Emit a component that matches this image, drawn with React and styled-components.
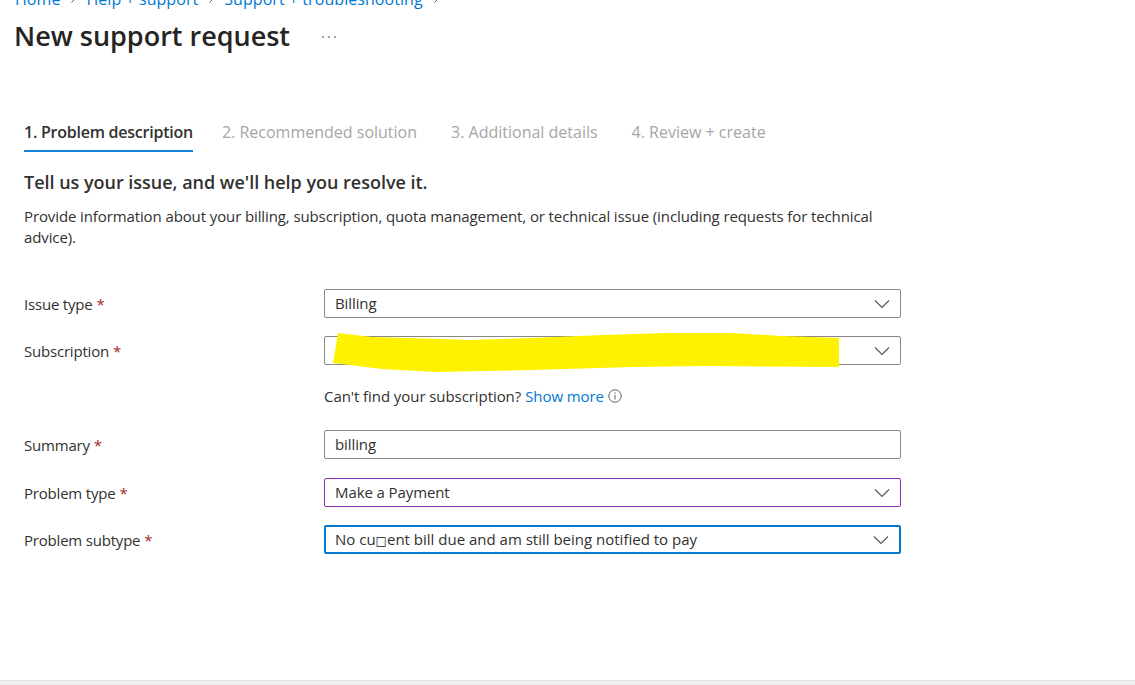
import React from 'react'
import styled, { createGlobalStyle } from 'styled-components'

const GlobalStyle = createGlobalStyle`
  html, body { margin: 0; padding: 0; background: #fff; overflow: hidden; }
  body { font-family: 'Open Sans', 'Noto Sans', sans-serif; color: #323130; }
`

const Page = styled.div`
  height: 685px;
  display: flex;
  flex-direction: column;
  overflow: hidden;
`
const Main = styled.div`
  flex: 1;
  padding-left: 15px;
  overflow: hidden;
`
const Breadcrumb = styled.nav`
  display: flex;
  align-items: center;
  height: 20px;
  margin-top: -11px;
  font-size: 16px;
  letter-spacing: 0.06px;
  white-space: nowrap;
  color: #0078d4;
`
const Crumb = styled.a`
  color: #0078d4;
`
const CrumbSep = styled.svg`
  width: 8px;
  height: 8px;
  margin: 0 9px 0 9px;
  fill: none;
  stroke: #605e5c;
  stroke-width: 1;
`
const TitleRow = styled.div`
  display: flex;
  align-items: center;
  margin-top: 7px;
  margin-left: -1px;
  height: 38px;
`
const Title = styled.h1`
  margin: 0;
  font-size: 27px;
  font-weight: 600;
  letter-spacing: 0;
  color: #252423;
`
const More = styled.svg`
  width: 16px;
  height: 4px;
  margin: 4px 0 0 31px;
  fill: #323130;
`
const Content = styled.div`
  padding-left: 9px;
  width: 877px;
`
const Tabs = styled.div`
  display: flex;
  margin-top: 59px;
`
const Tab = styled.div`
  height: 39px;
  line-height: 38px;
  box-sizing: border-box;
  font-size: 16px;
  white-space: nowrap;
  margin-right: ${p => (p.$active ? 29 : 34)}px;
  letter-spacing: ${p => (p.$active ? -0.24 : 0)}px;
  font-weight: ${p => (p.$active ? 600 : 400)};
  color: ${p => (p.$active ? '#323130' : '#a6a6a6')};
  border-bottom: 2px solid ${p => (p.$active ? '#0f82d9' : 'transparent')};
`
const Heading = styled.h2`
  margin: 18px 0 0;
  font-size: 18px;
  line-height: 24px;
  font-weight: 600;
  letter-spacing: -0.02px;
  color: #323130;
`
const Intro = styled.p`
  margin: 12px 0 0;
  font-size: 15px;
  line-height: 21px;
  letter-spacing: -0.11px;
  color: #323130;
`
const Form = styled.div`
  margin-top: 41px;
  display: flex;
  flex-direction: column;
`
const Row = styled.div`
  display: grid;
  grid-template-columns: 300px 577px;
  align-items: center;
  height: 29px;
  margin-bottom: ${p => p.$gap}px;
`
const Label = styled.label`
  font-size: 15px;
  letter-spacing: -0.2px;
  color: #323130;
`
const Req = styled.span`
  color: #a4262c;
  margin-left: 4px;
`
const Field = styled.div`
  position: relative;
  height: 29px;
  box-sizing: border-box;
  display: flex;
  align-items: center;
  justify-content: space-between;
  padding: 0 10px 2px ${p => (p.$focus ? 9 : 10)}px;
  border-radius: 2px;
  border: ${p => (p.$focus ? '2px' : '1px')} solid ${p => p.$color || '#8a8886'};
  font-size: 15px;
  letter-spacing: ${p => (p.$focus ? 0 : -0.1)}px;
  color: #323130;
  background: #fff;
`
const Missing = styled.span`
  font-family: 'DejaVu Sans', sans-serif;
  font-size: 12px;
  font-weight: 700;
  letter-spacing: 0;
  color: #111;
`
const Chevron = styled.svg`
  width: 16px;
  height: 10px;
  margin-top: 2px;
  fill: none;
  stroke: #555;
  stroke-width: 1.1;
`
const Scribble = styled.svg`
  position: absolute;
  left: 7px;
  top: -5px;
  width: 508px;
  height: 42px;
  fill: #fff200;
`
const Hint = styled.div`
  display: flex;
  align-items: center;
  height: 20px;
  margin: 1px 0 24px 300px;
  font-size: 15px;
  letter-spacing: -0.07px;
  color: #323130;
`
const HintLink = styled.a`
  color: #0078d4;
  margin-left: 4px;
`
const InfoIcon = styled.svg`
  width: 14px;
  height: 14px;
  margin-left: 4px;
  fill: none;
  stroke: #605e5c;
`
const FooterBar = styled.div`
  height: 5px;
  background: #f0f0f0;
  border-top: 1px solid #e6e6e6;
  box-sizing: border-box;
`

const Arrow = () => (
  <Chevron viewBox="0 0 16 10">
    <path d="M1 1.5 L8 8.5 L15 1.5" />
  </Chevron>
)

const crumbs = ['Home', 'Help + support', 'Support + troubleshooting']

export default function App() {
  return (
    <Page>
      <GlobalStyle />
      <Main>
        <Breadcrumb>
          {crumbs.map(c => (
            <React.Fragment key={c}>
              <Crumb>{c}</Crumb>
              <CrumbSep viewBox="0 0 8 8"><path d="M2.5 .5 L6 4 L2.5 7.5" /></CrumbSep>
            </React.Fragment>
          ))}
        </Breadcrumb>
        <TitleRow>
          <Title>New support request</Title>
          <More viewBox="0 0 16 4">
            <circle cx="2" cy="2" r="0.8" />
            <circle cx="8" cy="2" r="0.8" />
            <circle cx="14" cy="2" r="0.8" />
          </More>
        </TitleRow>
        <Content>
          <Tabs>
            <Tab $active>1. Problem description</Tab>
            <Tab>2. Recommended solution</Tab>
            <Tab>3. Additional details</Tab>
            <Tab>4. Review + create</Tab>
          </Tabs>
          <Heading>Tell us your issue, and we'll help you resolve it.</Heading>
          <Intro>
            Provide information about your billing, subscription, quota management, or technical issue (including requests for technical advice).
          </Intro>
          <Form>
            <Row $gap={18}>
              <Label>Issue type<Req>*</Req></Label>
              <Field>Billing<Arrow /></Field>
            </Row>
            <Row $gap={20}>
              <Label>Subscription<Req>*</Req></Label>
              <Field>
                <span />
                <Arrow />
                <Scribble viewBox="0 0 508 42" preserveAspectRatio="none">
                  <path d="M6 1 L40 5 L110 7 L135 8 L200 6 L270 3 L334 1 L400 1 L450 4 L507 6 L507 35 L373 34 L300 35 L200 38 L103 40 L50 37 L1 31 Z" />
                </Scribble>
              </Field>
            </Row>
            <Hint>
              Can't find your subscription?
              <HintLink>Show more</HintLink>
              <InfoIcon viewBox="0 0 14 14">
                <circle cx="7" cy="7" r="6.2" />
                <path d="M7 6 V10.5 M7 3.5 V4.8" />
              </InfoIcon>
            </Hint>
            <Row $gap={19}>
              <Label>Summary<Req>*</Req></Label>
              <Field>billing</Field>
            </Row>
            <Row $gap={18}>
              <Label>Problem type<Req>*</Req></Label>
              <Field $color="#8e2fb0">Make a Payment<Arrow /></Field>
            </Row>
            <Row $gap={0}>
              <Label>Problem subtype<Req>*</Req></Label>
              <Field $focus $color="#0078d4">
                <span>No cu<Missing>□</Missing>ent bill due and am still being notified to pay</span>
                <Arrow />
              </Field>
            </Row>
          </Form>
        </Content>
      </Main>
      <FooterBar />
    </Page>
  )
}
